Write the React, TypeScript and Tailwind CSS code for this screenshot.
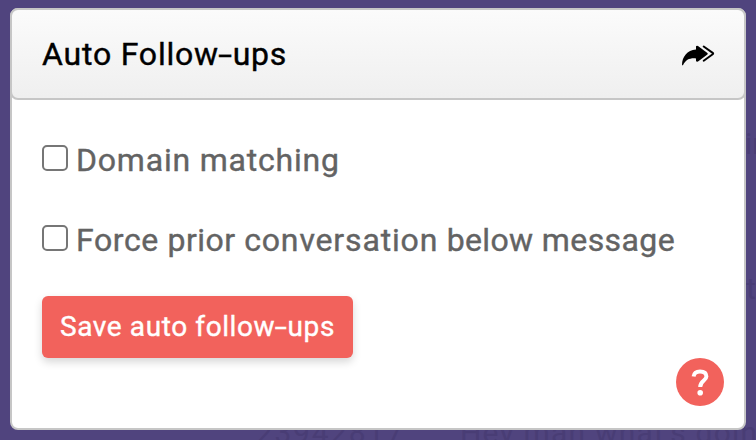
import type { ReactNode } from "react";

function Option({ children }: { children: ReactNode }) {
  return (
    <label className="flex h-10 items-center text-[32px] leading-10 text-[#636363]">
      <input
        type="checkbox"
        className="-mt-1 mr-2 size-[26px] shrink-0 appearance-none rounded-[5px] border-2 border-[#767676] bg-white"
      />
      {children}
    </label>
  );
}

function Hyphen() {
  return <span className="mx-0.5 inline-block origin-center scale-x-[1.55]">-</span>;
}

function ForwardIcon() {
  return (
    <svg width="34" height="22" viewBox="0 0 34 22" fill="none" className="mt-[3px] shrink-0">
      <path
        d="M1 19.6C1.2 12.2 6 5.2 15 4.6V1.3Q15.6 .2 17 .9L26.4 8Q27.2 8.7 26.4 9.4L17 16.5Q15.6 17 15 16V13.4C8.5 12.9 4.8 14.7 2.1 20Q1.3 21 1 19.6Z"
        fill="black"
      />
      <path
        d="M22.7 1.5L31.7 7.9Q32.6 8.6 31.7 9.3L22.7 15.7"
        stroke="black"
        strokeWidth="2"
        strokeLinecap="round"
        strokeLinejoin="round"
      />
    </svg>
  );
}

export default function App() {
  return (
    <div className="relative h-[440px] w-[756px] overflow-hidden bg-[#50447e] px-2.5 pt-2 font-[Roboto,sans-serif]">
      <span className="absolute left-[256px] top-[415px] whitespace-nowrap text-[30px] leading-9 tracking-[1.7px] text-[#493d75]">23942817</span>
      <span className="absolute left-[460px] top-[415px] whitespace-nowrap text-[30px] leading-9 tracking-[1.2px] text-[#493d75]">Hey man what's going</span>
      <span className="absolute left-[745px] top-[126px] text-[30px] leading-9 text-[#493d75]">in</span>
      <span className="absolute left-[746px] top-[271px] text-[30px] leading-9 text-[#493d75]">t</span>
      <main className="relative h-[422px] w-[736px] rounded-lg border-2 border-[#c6c6c6] bg-white">
        <header className="-mx-0.5 -mt-0.5 flex h-[92px] items-center justify-between rounded-lg border-2 border-[#c6c6c6] bg-linear-to-b from-[#fbfbfb] to-[#efefef] pl-[30px] pr-[29px]">
          <h1 className="text-[32px] leading-10 tracking-[0.8px] text-black [-webkit-text-stroke:0.4px]">
            Auto Follow<Hyphen />ups
          </h1>
          <ForwardIcon />
        </header>
        <form className="flex flex-col items-start gap-10 px-[30px] pt-10 [-webkit-text-stroke:0.4px]">
          <Option><span className="tracking-[0.8px]">Domain matching</span></Option>
          <Option>
            <span className="whitespace-nowrap tracking-[0.6px]">
              Force <span className="tracking-[0.5px]">prior</span>{" "}
              <span className="tracking-[0.85px]">conversation</span>{" "}
              <span className="tracking-[0.3px]">below</span>{" "}
              <span className="tracking-[0.4px]">message</span>
            </span>
          </Option>
          <button
            type="button"
            className="-mt-1 flex h-[62px] w-[311px] items-center justify-center whitespace-nowrap rounded-md bg-[#f2625c] text-[28px] leading-8 tracking-[0.6px] text-white shadow-[0_4px_8px_rgba(0,0,0,0.16)]"
          >
            <span>Save auto follow<Hyphen />ups</span>
          </button>
        </form>
        <button
          type="button"
          aria-label="Help"
          className="absolute bottom-[22px] right-5 flex size-12 items-center justify-center rounded-full bg-[#f2625c]"
        >
          <svg width="20" height="30" viewBox="0 0 20 30" fill="none" className="mt-0.5">
            <path d="M3.6 8.6C4 5.2 6.4 3.5 10 3.5C14 3.5 16.4 5.3 16.4 8.6C16.4 12.7 10.2 12.6 10.2 19" stroke="white" strokeWidth="4" />
            <circle cx="10.2" cy="24.8" r="2.8" fill="white" />
          </svg>
        </button>
      </main>
    </div>
  );
}
